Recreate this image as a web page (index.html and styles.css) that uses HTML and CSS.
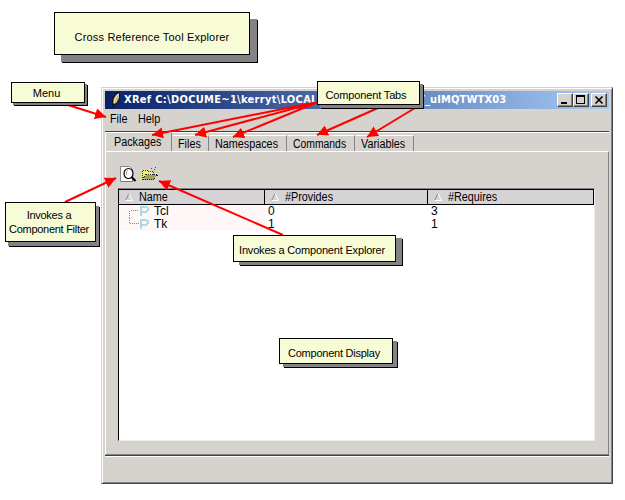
FILE: index.html
```html
<!DOCTYPE html>
<html lang="en">
<head>
<meta charset="utf-8">
<title>Cross Reference Tool Explorer</title>
<link rel="stylesheet" href="styles.css">
</head>
<body>
<main class="window">
  <header class="titlebar">
    <svg class="feather" width="10" height="16" viewBox="0 0 10 16"><path d="M1 15L2 13L1 10V7L3 4L5 1L8 0L9 2L8 8L6 12L3 13L2 16Z" fill="#111"/><path d="M2.500 12V7L5 3L8 1V6L5.500 11Z" fill="#c9b982"/><path d="M3 11L4 7L7 2" fill="none" stroke="#f5e9bd"/></svg>
    <span class="title path">XRef C:\DOCUME~1\kerryt\LOCAL</span>
    <span class="title suffix">T_uIMQTWTX03</span>
    <div class="controls">
      <span class="control"><svg width="14" height="12" shape-rendering="crispEdges"><path d="M3 8h6v2H3z"/></svg></span>
      <span class="control"><svg width="14" height="12" shape-rendering="crispEdges"><path d="M2 1h9v9H2zM3 3v6h7V3z" fill-rule="evenodd"/></svg></span>
      <span class="control close"><svg width="14" height="12"><path d="M3.500 2.500l7 7M10.500 2.500l-7 7" stroke="#000" stroke-width="1.700"/></svg></span>
    </div>
  </header>
  <nav class="menu"><span class="file"><b>File</b></span><span class="help"><b>Help</b></span></nav>
  <nav class="tabs">
    <span class="tab active"><b>Packages</b></span>
    <span class="tab files"><b>Files</b></span>
    <span class="tab names"><b>Namespaces</b></span>
    <span class="tab commands"><b>Commands</b></span>
    <span class="tab variables"><b>Variables</b></span>
  </nav>
  <section class="panel">
    <div class="tools">
      <svg width="17" height="17" viewBox="0 0 17 17"><path d="M.5.5h9l3 3v12H.5z" fill="#fff" stroke="#888"/><path d="M12.500 4v11.500H1" fill="none" stroke="#777"/><ellipse cx="8.500" cy="7.500" rx="4.500" ry="5" fill="#fff" stroke="#000" stroke-width="1.200"/><path d="M6.500 9V6L8 4" fill="none" stroke="#aaa"/><path d="M11.500 11l4 4" stroke="#000" stroke-width="2.200"/></svg>
      <svg class="folder" width="17" height="17" viewBox="0 0 17 17" shape-rendering="crispEdges"><path d="M1 14V5h1V4h4v1h6v4H5z" fill="#f0ee72"/><path d="M1.500 14V5.500H2.500V4.500H6.500V5.500H12.500V9" fill="none" stroke="#333" stroke-dasharray="1 1"/><path d="M2 14l3-5h11l-3 5z" fill="#a5a55a"/><path d="M1.500 13.500H13L16 9.500V8.500H5L2 13" fill="none" stroke="#222" stroke-dasharray="1 1"/><path d="M10 2h1v1h-1zM13 3h1v1h-1zM14 1h1v1h-1z" fill="#f00"/></svg>
    </div>
    <div class="table">
      <div class="row head">
        <span><svg width="8" height="8"><path d="M.5 7.500L4 .5" stroke="#888"/><path d="M4 .5L7.500 7.500H.5" fill="none" stroke="#fff"/></svg><b>Name</b></span>
        <span><svg width="8" height="8"><path d="M.5 7.500L4 .5" stroke="#888"/><path d="M4 .5L7.500 7.500H.5" fill="none" stroke="#fff"/></svg><b>#Provides</b></span>
        <span><svg width="8" height="8"><path d="M.5 7.500L4 .5" stroke="#888"/><path d="M4 .5L7.500 7.500H.5" fill="none" stroke="#fff"/></svg><b>#Requires</b></span>
      </div>
      <div class="row data"><span class="name"><svg width="22" height="13" shape-rendering="crispEdges"><path d="M.5 12.500V5.500H10" fill="none" stroke="#888" stroke-dasharray="1 1"/><path d="M12 11V2h5l2 1v2l-2 2h-5" fill="none" stroke="#add8e6" stroke-width="2"/></svg><i>Tcl</i></span><span>0</span><span>3</span></div>
      <div class="row data"><span class="name"><svg width="22" height="13" shape-rendering="crispEdges"><path d="M.5 0V5.500H10" fill="none" stroke="#888" stroke-dasharray="1 1"/><path d="M12 11V2h5l2 1v2l-2 2h-5" fill="none" stroke="#add8e6" stroke-width="2"/></svg><i>Tk</i></span><span>1</span><span>1</span></div>
    </div>
  </section>
  <footer class="status"></footer>
</main>
<svg class="arrows" width="625" height="500" viewBox="0 0 625 500">
  <defs><marker id="head" markerUnits="userSpaceOnUse" markerWidth="12" markerHeight="12" refX="11" refY="5.500" orient="auto"><path d="M0 0L11 5.500L0 11z" fill="#f00"/></marker></defs>
  <g stroke="#f00" stroke-width="2">
    <path d="M68 105L106 117" marker-end="url(#head)"/>
    <path d="M318 102L152 135" marker-end="url(#head)"/>
    <path d="M318 102L195 135" marker-end="url(#head)"/>
    <path d="M318 102L233 137" marker-end="url(#head)"/>
    <path d="M378 108L317 135" marker-end="url(#head)"/>
    <path d="M415 108L367 137" marker-end="url(#head)"/>
    <path d="M65 202L116 178" marker-end="url(#head)"/>
    <path d="M283 235L159 181" marker-end="url(#head)"/>
  </g>
</svg>
<aside class="note main-note"><span>Cross Reference Tool Explorer</span></aside>
<aside class="note menu-note"><span>Menu</span></aside>
<aside class="note tabs-note"><span>Component Tabs</span></aside>
<aside class="note filter-note"><span>Invokes a</span><span>Component Filter</span></aside>
<aside class="note explorer-note"><span>Invokes a Component Explorer</span></aside>
<aside class="note display-note"><span>Component Display</span></aside>
</body>
</html>
```
FILE: styles.css
```css
* { box-sizing: border-box; }
body { margin: 0; width: 625px; height: 500px; background: #fff; font: 11px/13px "Liberation Sans", sans-serif; color: #000; display: flow-root; position: relative; overflow: hidden; }
b { font-weight: normal; display: inline-block; transform: scaleX(.9); transform-origin: 0 50%; }
i { font-style: normal; }
svg { display: block; flex: none; }
.window { margin: 87px 0 0 101px; width: 512px; height: 397px; background: #d6d3ce; border: 1px solid #d6d3ce; border-right-color: #424142; border-bottom-color: #424142; box-shadow: inset 1px 1px #fff, inset -1px -1px #848284; padding: 3px; display: flex; flex-direction: column; }
.titlebar { height: 18px; flex: none; background: linear-gradient(90deg, #082069, #a5cbf7); display: flex; align-items: center; padding: 0 2px 0 6px; }
.title { font: bold 11px/16px "DejaVu Sans Condensed", "DejaVu Sans", sans-serif; font-stretch: condensed; color: #fff; white-space: nowrap; }
.path { margin-left: 3px; width: 294px; letter-spacing: .3px; }
.suffix { width: 88px; letter-spacing: .15px; }
.controls { display: flex; margin-left: auto; }
.control { width: 16px; height: 14px; background: #d6d3ce; border: 1px solid #fff; border-right-color: #424142; border-bottom-color: #424142; box-shadow: inset -1px -1px #848284; }
.close { margin-left: 2px; }
.menu { height: 23px; flex: none; display: flex; padding: 4px 0 0 5px; font-size: 12px; border-bottom: 1px solid #424142; box-shadow: 0 1px #fff; }
.file { width: 28px; }
.tabs { height: 19px; flex: none; display: flex; align-items: flex-end; font-size: 12px; }
.tab { height: 16px; border-top: 1px solid #fff; border-right: 1px solid #848284; padding: 2px 0 0 6px; white-space: nowrap; border-radius: 2px 2px 0 0; }
.active { width: 67px; height: 19px; border-left: 1px solid #fff; padding: 3px 0 0 8px; }
.files { width: 37px; }
.names { width: 78px; }
.commands { width: 68px; }
.commands b { transform: scaleX(.865); }
.variables { width: 59px; }
.panel { height: 304px; flex: none; border-top: 1px solid #fff; border-left: 1px solid #fff; border-right: 1px solid #848284; border-bottom: 1px solid #848284; box-shadow: 0 1px #424142, 0 2px #fff; padding: 14px 13px 13px 12px; }
.tools { display: flex; gap: 4px; height: 22px; padding-left: 2px; }
.table { height: 253px; background: #fff; border: 1px solid #848284; border-left-color: #000; border-right-color: #eee; border-bottom-color: #eee; }
.row { display: grid; grid-template-columns: 146px 163px 1fr; }
.head { height: 16px; background: #d6d3d6; border: 1px solid #000; border-left: 0; font-size: 12px; }
.head span { display: flex; align-items: center; padding-left: 6px; gap: 6px; border-right: 1px solid #000; }
.head span:last-child { border-right: 0; }
.data { height: 13px; font-size: 12px; }
.data span { padding-left: 3px; }
.data .name { display: flex; padding-left: 9px; background: #fff7f7; margin-left: 1px; gap: 3px; }
.arrows { position: absolute; left: 0; top: 0; }
.note { position: absolute; background: #f7fbd6; border: 1px solid #000; display: flex; flex-direction: column; align-items: center; justify-content: center; line-height: 14px; white-space: nowrap; }
.main-note { left: 54px; top: 12px; width: 196px; height: 43px; padding-top: 7px; letter-spacing: .18px; box-shadow: 7px 7px 0 #848284, 8px 8px #000; }
.menu-note { left: 11px; top: 82px; width: 74px; height: 21px; padding-right: 3px; box-shadow: 2px 2px #848284, 3px 3px #000; }
.tabs-note { left: 317px; top: 81px; width: 103px; height: 24px; padding-top: 4px; padding-right: 5px; letter-spacing: -.15px; box-shadow: 3px 3px #848284, 4px 4px #000; }
.filter-note { left: 5px; top: 202px; width: 91px; height: 40px; padding-right: 3px; letter-spacing: -.28px; box-shadow: 3px 4px #848284, 4px 5px #000; }
.explorer-note { left: 233px; top: 235px; width: 163px; height: 27px; padding-top: 3px; padding-right: 5px; letter-spacing: -.18px; box-shadow: 6px 3px #848284, 7px 4px #000; }
.display-note { left: 279px; top: 338px; width: 114px; height: 26px; padding-top: 3px; padding-right: 4px; letter-spacing: -.24px; box-shadow: 4px 3px #848284, 5px 4px #000; }
```
